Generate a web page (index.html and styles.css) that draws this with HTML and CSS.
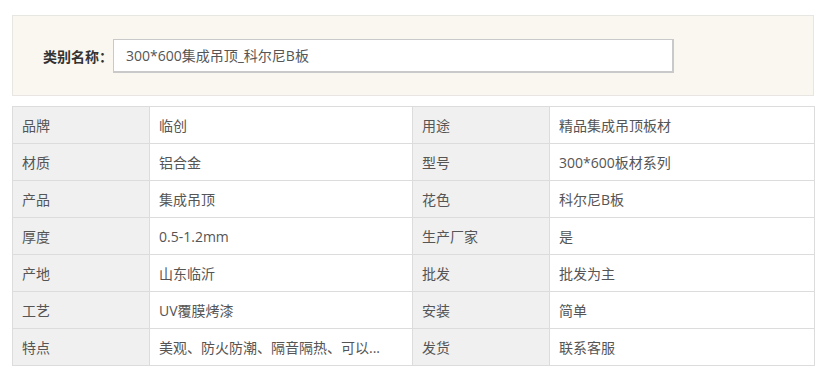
FILE: index.html
```html
<!DOCTYPE html>
<html lang="zh-CN">
<head>
<meta charset="utf-8">
<link rel="stylesheet" href="styles.css">
</head>
<body>
<div class="page">
  <div class="category">
    <span class="category-label">类别名称：</span>
    <div class="category-input">300*600集成吊顶_科尔尼B板</div>
  </div>
  <table class="specs">
    <colgroup>
      <col class="c-key"><col class="c-val"><col class="c-key"><col class="c-val2">
    </colgroup>
    <tr><td class="key">品牌</td><td>临创</td><td class="key">用途</td><td>精品集成吊顶板材</td></tr>
    <tr><td class="key">材质</td><td>铝合金</td><td class="key">型号</td><td>300*600板材系列</td></tr>
    <tr><td class="key">产品</td><td>集成吊顶</td><td class="key">花色</td><td>科尔尼B板</td></tr>
    <tr><td class="key">厚度</td><td>0.5-1.2mm</td><td class="key">生产厂家</td><td>是</td></tr>
    <tr><td class="key">产地</td><td>山东临沂</td><td class="key">批发</td><td>批发为主</td></tr>
    <tr><td class="key">工艺</td><td>UV覆膜烤漆</td><td class="key">安装</td><td>简单</td></tr>
    <tr><td class="key">特点</td><td>美观、防火防潮、隔音隔热、可以...</td><td class="key">发货</td><td>联系客服</td></tr>
  </table>
</div>
</body>
</html>
```

FILE: styles.css
```css
* { box-sizing: border-box; }
html, body { margin: 0; padding: 0; background: #fff; }
body {
  font-family: "Open Sans", "Noto Sans CJK SC", sans-serif;
  font-size: 14px;
  color: #555;
}
.page {
  padding: 15px 13px 0 12px;
}
.category {
  height: 81px;
  background: #faf7f1;
  border: 1px solid #e8e6e2;
  display: flex;
  align-items: center;
  padding-left: 30px;
  margin-bottom: 10px;
}
.category-label {
  font-weight: bold;
  color: #333;
  font-size: 14px;
  width: 70px;
  white-space: nowrap;
}
.category-input {
  width: 561px;
  height: 34px;
  background: #fff;
  border: 1px solid #c9c9c9;
  border-width: 1px 2px 2px 1px;
  display: flex;
  align-items: center;
  padding-left: 12px;
  font-size: 14px;
  color: #555;
}
.specs {
  width: 802px;
  border-collapse: collapse;
  table-layout: fixed;
}
.c-key { width: 137px; }
.c-val { width: 263px; }
.c-val2 { width: 265px; }
.specs td {
  height: 37px;
  border: 1px solid #dcdcdc;
  padding: 0 9px;
  white-space: nowrap;
  overflow: hidden;
  color: #555;
}
.specs td.key {
  background: #f0f0f0;
}
```
